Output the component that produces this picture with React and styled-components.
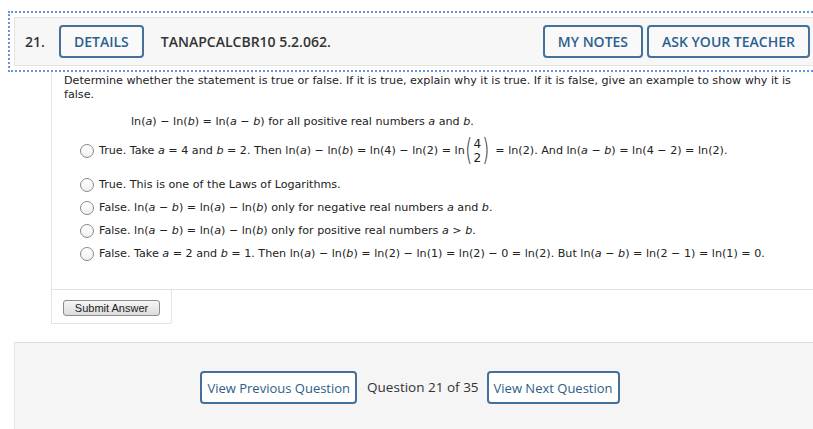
import React from "react"
import styled, { createGlobalStyle } from "styled-components"

const Global = createGlobalStyle`
  html, body {
    margin: 0;
    padding: 0;
    background: #fff;
    overflow: hidden;
  }
  body {
    width: 813px;
    height: 429px;
  }
`

const Page = styled.div`
  padding: 11px 0 0 8px;
  width: 813px;
  box-sizing: border-box;
`

const FocusRing = styled.div`
  border: 2px dotted #6595d8;
  padding: 4px;
  margin-right: -8px;
`

const Header = styled.div`
  display: flex;
  align-items: center;
  height: 47px;
  background: #f7f7f7;
  border: 1px solid #e3e3e3;
  padding: 0 4px 0 10px;
  font-family: "Open Sans", sans-serif;
  font-size: 14px;
  color: #333;
`

const Number = styled.span`
  font-weight: 600;
  width: 34px;
`

const Title = styled.span`
  font-weight: 600;
  margin-left: 17px;
  flex: 1;
`

const OutlineButton = styled.button`
  font-family: "Open Sans", sans-serif;
  font-size: ${(p) => (p.$caps ? 14 : 13)}px;
  font-weight: ${(p) => (p.$caps ? 600 : 400)};
  text-transform: ${(p) => (p.$caps ? "uppercase" : "none")};
  color: ${(p) => (p.$caps ? "#2d5f8f" : "#2e5d88")};
  background: ${(p) => (p.$caps ? "#f9f9f9" : "#fff")};
  border: 2px solid #44709a;
  border-radius: 4px;
  height: 33px;
  padding: 0 ${(p) => p.$pad || 12}px;
  margin-left: ${(p) => p.$ml || 0}px;
  cursor: pointer;
  white-space: nowrap;
`

const Panel = styled.div`
  margin-left: 43px;
  border-left: 1px solid #e2e2e2;
  font-family: "DejaVu Sans", Verdana, sans-serif;
  font-size: 11.15px;
  color: #222;
`

const QuestionBody = styled.div`
  padding: 2px 20px 28px 12px;
  border-bottom: 1px solid #e2e2e2;
`

const Prompt = styled.p`
  margin: 0;
  line-height: 14px;
  width: 740px;
`

const Statement = styled.p`
  margin: 13px 0 0 67px;
  line-height: 14px;
`

const Options = styled.div`
  margin: 4px 0 0 16px;
  display: flex;
  flex-direction: column;
  gap: 9px;
`

const Option = styled.label`
  display: flex;
  align-items: center;
  gap: 5px;
  min-height: ${(p) => (p.$tall ? 36 : 14)}px;
  line-height: 14px;
  white-space: nowrap;
`

const Radio = styled.span`
  width: 12px;
  height: 12px;
  border-radius: 50%;
  border: 1px solid #8a8a8a;
  background: linear-gradient(#fff, #f0f0f0);
  flex-shrink: 0;
`

const Frac = styled.span`
  display: inline-flex;
  align-items: center;
  vertical-align: middle;
  margin: -8px 2px -8px 0;
`

const Paren = styled.span`
  font-family: "DejaVu Sans", sans-serif;
  font-size: 30px;
  font-weight: 200;
  line-height: 28px;
  transform: scaleX(0.6);
  margin: -3px -2px 0;
`

const Stack = styled.span`
  display: inline-flex;
  flex-direction: column;
  align-items: center;
  line-height: 14px;
  font-size: 12px;
  padding: 0 1px;
`

const SubmitArea = styled.div`
  width: 120px;
  height: 34px;
  box-sizing: border-box;
  border-right: 1px solid #e2e2e2;
  border-bottom: 1px solid #e2e2e2;
  border-bottom-right-radius: 3px;
  padding: 10px 0 0 11px;
`

const SubmitButton = styled.button`
  display: block;
  font-family: "Liberation Sans", Arial, sans-serif;
  font-size: 11px;
  color: #222;
  height: 16px;
  width: 97px;
  padding: 0;
  border: 1px solid #8d8d8d;
  border-radius: 3px;
  background: linear-gradient(#f6f6f6, #dcdcdc);
  line-height: 13px;
`

const Nav = styled.div`
  margin: 18px 0 0 6px;
  height: 120px;
  background: #f5f5f5;
  border-top: 1px solid #dedede;
  border-left: 1px solid #e6e6e6;
  display: flex;
  justify-content: center;
  align-items: flex-start;
  padding: 28px 8px 0 0;
  font-family: "Open Sans", sans-serif;
  font-size: 13.5px;
  color: #333;
`

const NavLabel = styled.span`
  line-height: 33px;
  margin: 0 8px 0 10px;
`

const I = styled.i`
  font-style: italic;
`

const App = () => {
  return (
    <Page>
      <Global />
      <FocusRing>
        <Header>
          <Number>21.</Number>
          <OutlineButton $caps $pad={13}>Details</OutlineButton>
          <Title>TANAPCALCBR10 5.2.062.</Title>
          <OutlineButton $caps $pad={13}>My Notes</OutlineButton>
          <OutlineButton $caps $pad={13} $ml={4}>Ask Your Teacher</OutlineButton>
        </Header>
      </FocusRing>
      <Panel>
        <QuestionBody>
          <Prompt>
            Determine whether the statement is true or false. If it is true, explain why it is true. If it is false, give an example to show why it is false.
          </Prompt>
          <Statement>
            ln(<I>a</I>) − ln(<I>b</I>) = ln(<I>a</I> − <I>b</I>) for all positive real numbers <I>a</I> and <I>b</I>.
          </Statement>
          <Options>
            <Option $tall>
              <Radio />
              <span>
                True. Take <I>a</I> = 4 and <I>b</I> = 2. Then ln(<I>a</I>) − ln(<I>b</I>) = ln(4) − ln(2) = ln<Frac>
                  <Paren>(</Paren>
                  <Stack>
                    <span>4</span>
                    <span>2</span>
                  </Stack>
                  <Paren>)</Paren>
                </Frac>{" "}
                = ln(2). And ln(<I>a</I> − <I>b</I>) = ln(4 − 2) = ln(2).
              </span>
            </Option>
            <Option>
              <Radio />
              <span>True. This is one of the Laws of Logarithms.</span>
            </Option>
            <Option>
              <Radio />
              <span>
                False. ln(<I>a</I> − <I>b</I>) = ln(<I>a</I>) − ln(<I>b</I>) only for negative real numbers <I>a</I> and <I>b</I>.
              </span>
            </Option>
            <Option>
              <Radio />
              <span>
                False. ln(<I>a</I> − <I>b</I>) = ln(<I>a</I>) − ln(<I>b</I>) only for positive real numbers <I>a</I> &gt; <I>b</I>.
              </span>
            </Option>
            <Option>
              <Radio />
              <span>
                False. Take <I>a</I> = 2 and <I>b</I> = 1. Then ln(<I>a</I>) − ln(<I>b</I>) = ln(2) − ln(1) = ln(2) − 0 = ln(2). But ln(<I>a</I> − <I>b</I>) = ln(2 − 1) = ln(1) = 0.
              </span>
            </Option>
          </Options>
        </QuestionBody>
        <SubmitArea>
          <SubmitButton>Submit Answer</SubmitButton>
        </SubmitArea>
      </Panel>
      <Nav>
        <OutlineButton $pad={5}>View Previous Question</OutlineButton>
        <NavLabel>Question 21 of 35</NavLabel>
        <OutlineButton $pad={5}>View Next Question</OutlineButton>
      </Nav>
    </Page>
  )
}

export default App
